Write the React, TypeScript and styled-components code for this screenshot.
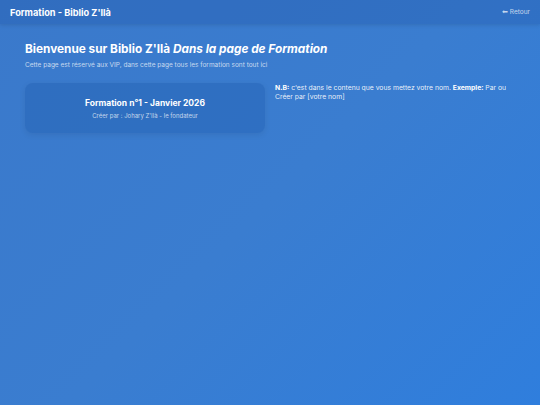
import React from "react";
import styled, { createGlobalStyle } from "styled-components";

const GlobalStyle = createGlobalStyle`
  * { box-sizing: border-box; }
  html, body {
    margin: 0;
    padding: 0;
    height: 100%;
  }
  body {
    font-family: Inter, "Noto Sans", "Liberation Sans", sans-serif;
    color: #ffffff;
    background: linear-gradient(135deg, #3a79cb 0%, #3a7dd0 50%, #2f7edd 100%);
    min-height: 405px;
  }
`;

const Page = styled.div`
  min-height: 405px;
  display: flex;
  flex-direction: column;
`;

const Header = styled.header`
  height: 24px;
  display: flex;
  align-items: center;
  justify-content: space-between;
  padding: 0 10px;
  background: rgba(30, 80, 160, 0.28);
  box-shadow: 0 1px 4px rgba(0, 0, 0, 0.12);
`;

const Brand = styled.div`
  font-size: 9.2px;
  font-weight: 700;
`;

const BackLink = styled.a`
  font-size: 6.5px;
  color: rgba(255, 255, 255, 0.72);
  text-decoration: none;
`;

const Main = styled.main`
  padding: 17px 25px 0;
`;

const Title = styled.h1`
  margin: 0;
  font-size: 11.8px;
  font-weight: 700;
  line-height: 16px;

  em {
    font-style: italic;
  }
`;

const Lead = styled.p`
  margin: 4px 0 0;
  font-size: 6.5px;
  color: rgba(255, 255, 255, 0.72);
`;

const Grid = styled.div`
  display: grid;
  grid-template-columns: 1fr 1fr;
  gap: 10px;
  margin-top: 14px;
  align-items: start;
`;

const Card = styled.div`
  height: 50px;
  border-radius: 8px;
  background: rgba(28, 88, 170, 0.35);
  box-shadow: 0 2px 6px rgba(0, 0, 0, 0.08);
  display: flex;
  flex-direction: column;
  align-items: center;
  justify-content: center;
  gap: 4px;
`;

const CardTitle = styled.div`
  font-size: 8.5px;
  font-weight: 700;
`;

const CardMeta = styled.div`
  font-size: 6px;
  color: rgba(255, 255, 255, 0.72);
`;

const Note = styled.p`
  margin: 0;
  font-size: 6.8px;
  line-height: 9px;
  color: rgba(255, 255, 255, 0.9);

  strong {
    font-weight: 700;
    color: #ffffff;
  }
`;

export default function App() {
  return (
    <>
      <GlobalStyle />
      <Page>
        <Header>
          <Brand>Formation - Biblio Z'Ilà</Brand>
          <BackLink href="#">⬅ Retour</BackLink>
        </Header>
        <Main>
          <Title>
            Bienvenue sur Biblio Z'Ilà <em>Dans la page de Formation</em>
          </Title>
          <Lead>
            Cette page est réservé aux VIP, dans cette page tous les formation
            sont tout ici
          </Lead>
          <Grid>
            <Card>
              <CardTitle>Formation n°1 - Janvier 2026</CardTitle>
              <CardMeta>Créer par : Johary Z'Ilà - le fondateur</CardMeta>
            </Card>
            <Note>
              <strong>N.B:</strong> c'est dans le contenu que vous mettez votre
              nom. <strong>Exemple:</strong> Par ou Créer par [votre nom]
            </Note>
          </Grid>
        </Main>
      </Page>
    </>
  );
}
